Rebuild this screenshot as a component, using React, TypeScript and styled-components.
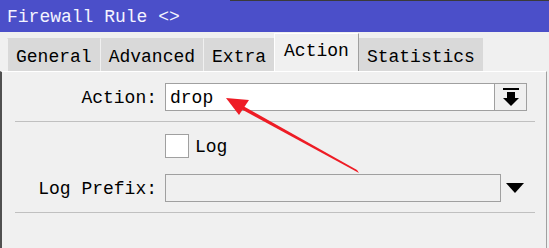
import React from "react";
import styled, { createGlobalStyle } from "styled-components";

const GlobalStyle = createGlobalStyle`
  html, body {
    margin: 0;
    padding: 0;
    background: #f0f0f0;
    overflow: hidden;
  }
  body {
    font-family: "Liberation Mono", "Noto Sans CJK SC", monospace;
    font-size: 18px;
    color: #000;
  }
`;

const tabs = ["General", "Advanced", "Extra", "Action", "Statistics"];

export default function App() {
  const [active, setActive] = React.useState("Action");

  return (
    <Window>
      <GlobalStyle />
      <TitleBar>Firewall Rule &lt;&gt;</TitleBar>
      <TabStrip>
        {tabs.map((t) => (
          <Tab key={t} active={t === active} onClick={() => setActive(t)}>
            {t}
          </Tab>
        ))}
      </TabStrip>
      <Panel>
        <Row>
          <Label>Action:</Label>
          <TextBox>drop</TextBox>
          <DropButton>
            <svg width="16" height="18" viewBox="0 0 16 18">
              <rect x="0" y="0" width="16" height="2" fill="#000" />
              <rect x="4" y="4" width="8" height="6" fill="#000" />
              <polygon points="0,10 16,10 8,18" fill="#000" />
            </svg>
          </DropButton>
        </Row>
        <Separator />
        <CheckRow>
          <span />
          <CheckLabel>
            <CheckBox />
            Log
          </CheckLabel>
        </CheckRow>
        <Row>
          <Label>Log Prefix:</Label>
          <TextBox disabled />
          <ArrowSlot>
            <svg width="18" height="10" viewBox="0 0 18 10">
              <polygon points="0,0 18,0 9,10" fill="#000" />
            </svg>
          </ArrowSlot>
        </Row>
        <Separator />
        <Callout width="549" height="248" viewBox="0 0 549 248">
          <polygon points="236,102 241,109 359,173 357,170" fill="#ee1c25" />
          <polygon points="226,98 249,100 239,115" fill="#ee1c25" />
        </Callout>
      </Panel>
    </Window>
  );
}

const Window = styled.div`
  position: relative;
  width: 549px;
  height: 248px;
  overflow: hidden;
  background: #f0f0f0;
`;

const TitleBar = styled.div`
  height: 32px;
  background: linear-gradient(to right, transparent 230px, #3a3a3a 230px) top / 100% 1px no-repeat, #4b4fc9;
  color: #f4f4ff;
  padding: 2px 0 0 7px;
  box-sizing: border-box;
  display: flex;
  align-items: center;
  font-size: 18px;
  white-space: pre;
`;

const TabStrip = styled.div`
  display: flex;
  align-items: flex-end;
  height: 39px;
  padding-left: 7px;
`;

const Tab = styled.div<{ active?: boolean }>`
  box-sizing: border-box;
  height: ${(p) => (p.active ? "38px" : "33px")};
  padding: ${(p) => (p.active ? "0 9px 3px 9px" : "3px 8px 0 8px")};
  margin: ${(p) => (p.active ? "0 -1px 0 0" : "0")};
  display: flex;
  align-items: center;
  background: ${(p) => (p.active ? "#f0f0f0" : "#d9d9d9")};
  border-top: 1px solid ${(p) => (p.active ? "#ffffff" : "#d9d9d9")};
  border-left: 1px solid ${(p) => (p.active ? "#ffffff" : "#f0f0f0")};
  border-right: ${(p) => (p.active ? "1px solid #a0a0a0" : "0")};
  position: relative;
  z-index: ${(p) => (p.active ? 1 : 0)};
  cursor: default;
  white-space: pre;
`;

const Panel = styled.div`
  position: relative;
  box-sizing: border-box;
  height: 177px;
  margin-right: 2px;
  border-top: 1px solid #ffffff;
  border-left: 2px solid #505050;
  border-right: 1px solid #a0a0a0;
  padding: 11px 10px 0 13px;
`;

const Row = styled.div`
  display: grid;
  grid-template-columns: 142px 336px 33px;
  align-items: center;
  height: 28px;
  & > :nth-child(2) {
    margin-left: 8px;
  }
  & > :nth-child(3) {
    margin-left: 1px;
  }
`;

const Label = styled.div`
  text-align: right;
  white-space: pre;
  padding-top: 2px;
`;

const TextBox = styled.div<{ disabled?: boolean }>`
  box-sizing: border-box;
  height: 28px;
  width: 336px;
  border: 1px solid #a0a0a0;
  background: ${(p) => (p.disabled ? "#f0f0f0" : "#ffffff")};
  padding: 2px 0 0 4px;
  display: flex;
  align-items: center;
`;

const DropButton = styled.div`
  box-sizing: border-box;
  height: 28px;
  width: 33px;
  border: 1px solid #a0a0a0;
  background: #f0f0f0;
  display: flex;
  align-items: center;
  justify-content: center;
`;

const ArrowSlot = styled.div`
  height: 28px;
  width: 33px;
  display: flex;
  align-items: center;
  justify-content: center;
  padding-left: 8px;
  box-sizing: border-box;
`;

const Separator = styled.div`
  height: 1px;
  width: 520px;
  background: #c0c0c0;
  margin: 10px 0 12px;
`;

const CheckRow = styled.div`
  display: grid;
  grid-template-columns: 150px auto;
  height: 24px;
  margin-bottom: 16px;
`;

const CheckLabel = styled.label`
  display: flex;
  align-items: center;
  gap: 6px;
  padding-top: 2px;
  & > span {
    margin-top: -2px;
  }
`;

const CheckBox = styled.span`
  box-sizing: border-box;
  width: 24px;
  height: 24px;
  border: 1px solid #a0a0a0;
  background: #ffffff;
`;

const Callout = styled.svg`
  position: absolute;
  left: -2px;
  top: -72px;
  pointer-events: none;
`;
